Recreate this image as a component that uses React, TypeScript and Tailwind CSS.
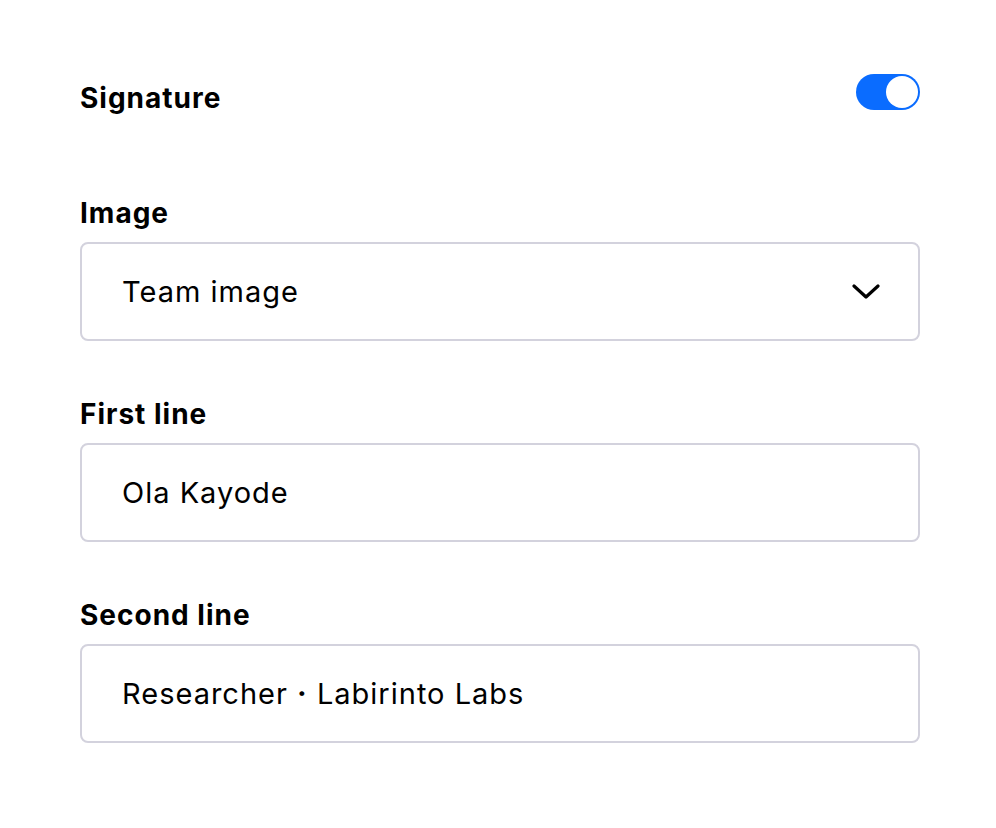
import React from "react";

function Label({ children }: { children: React.ReactNode }) {
  return <div className="text-[28px] font-bold leading-[28px] tracking-[1px] text-black">{children}</div>;
}

function Field({ children, select }: { children: React.ReactNode; select?: boolean }) {
  return (
    <div className="mt-[15px] flex h-[99px] items-center justify-between rounded-[8px] border-2 border-[#d3d2dd] bg-white pl-[40px] pr-[38px]">
      <span className="text-[29px] leading-[29px] tracking-[1px] text-black">{children}</span>
      {select && (
        <svg width="28" height="16" viewBox="0 0 28 16" fill="none">
          <path d="M2 2 L14 13 L26 2" stroke="black" strokeWidth="3.2" strokeLinecap="round" strokeLinejoin="round" />
        </svg>
      )}
    </div>
  );
}

export default function App() {
  return (
    <div className="min-h-[828px] w-full bg-white px-[80px] pt-[74px]" style={{ fontFamily: "Inter, 'Noto Sans', sans-serif" }}>
      <div className="w-[840px]">
        <div className="flex items-start justify-between">
          <div className="mt-[10px]">
            <Label>Signature</Label>
          </div>
          <div className="flex h-[36px] w-[64px] items-center justify-end rounded-full bg-[#0a6cff] p-[2px]">
            <div className="h-[32px] w-[32px] rounded-full bg-white" />
          </div>
        </div>
        <div className="mt-[87px]">
          <Label>Image</Label>
          <Field select>Team image</Field>
        </div>
        <div className="mt-[59px]">
          <Label>First line</Label>
          <Field>Ola Kayode</Field>
        </div>
        <div className="mt-[59px]">
          <Label>Second line</Label>
          <Field>
            Researcher <span className="font-bold">·</span> Labirinto Labs
          </Field>
        </div>
      </div>
    </div>
  );
}
